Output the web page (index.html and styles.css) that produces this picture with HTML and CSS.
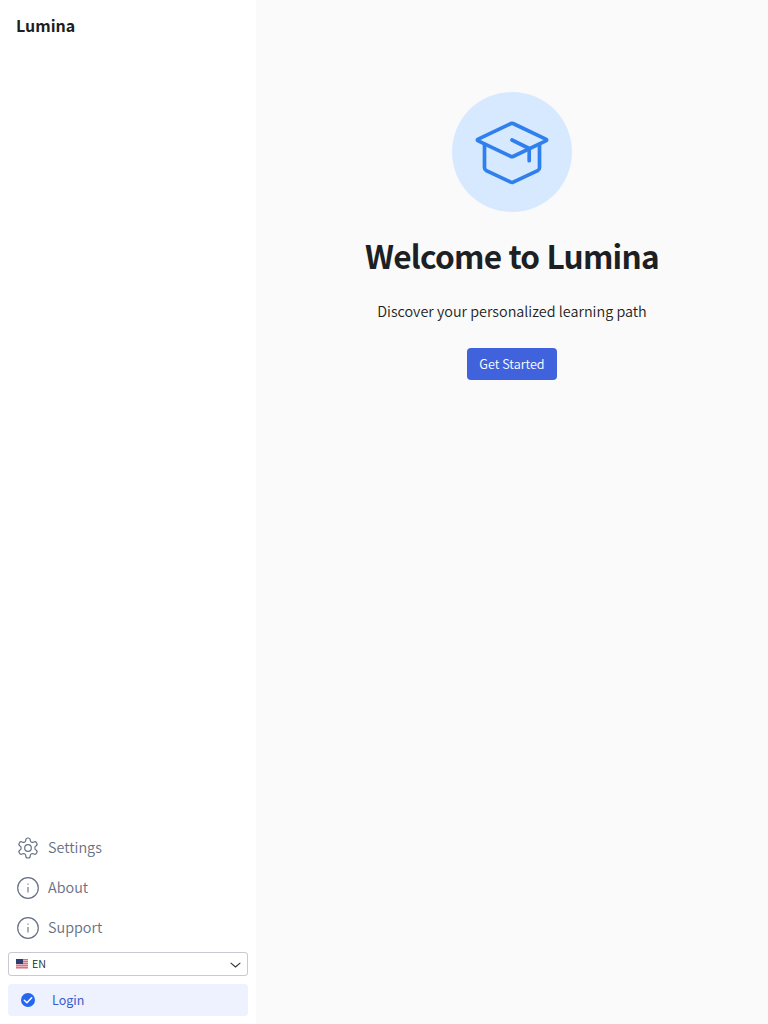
FILE: index.html
```html
<!DOCTYPE html>
<html lang="en">
<head>
<meta charset="utf-8">
<title>Lumina</title>
<link rel="stylesheet" href="styles.css">
</head>
<body>
<div class="app">
  <aside class="sidebar">
    <div class="brand">Lumina</div>
    <nav class="nav">
      <a class="nav-item">
        <svg class="nav-icon" viewBox="0 0 24 24"><path d="M12.22 2h-.44a2 2 0 0 0-2 2v.18a2 2 0 0 1-1 1.73l-.43.25a2 2 0 0 1-2 0l-.15-.08a2 2 0 0 0-2.73.73l-.22.38a2 2 0 0 0 .73 2.73l.15.1a2 2 0 0 1 1 1.72v.51a2 2 0 0 1-1 1.74l-.15.09a2 2 0 0 0-.73 2.73l.22.38a2 2 0 0 0 2.73.73l.15-.08a2 2 0 0 1 2 0l.43.25a2 2 0 0 1 1 1.73V20a2 2 0 0 0 2 2h.44a2 2 0 0 0 2-2v-.18a2 2 0 0 1 1-1.73l.43-.25a2 2 0 0 1 2 0l.15.08a2 2 0 0 0 2.73-.73l.22-.39a2 2 0 0 0-.73-2.73l-.15-.08a2 2 0 0 1-1-1.74v-.5a2 2 0 0 1 1-1.74l.15-.09a2 2 0 0 0 .73-2.73l-.22-.38a2 2 0 0 0-2.73-.73l-.15.08a2 2 0 0 1-2 0l-.43-.25a2 2 0 0 1-1-1.73V4a2 2 0 0 0-2-2z"/><circle cx="12" cy="12" r="3.3"/></svg>
        <span>Settings</span>
      </a>
      <a class="nav-item">
        <svg class="nav-icon" viewBox="0 0 24 24"><circle cx="12" cy="12" r="10.3"/><path class="info-mark" d="M12 11v5.5M12 7.5v1.2"/></svg>
        <span>About</span>
      </a>
      <a class="nav-item">
        <svg class="nav-icon" viewBox="0 0 24 24"><circle cx="12" cy="12" r="10.3"/><path class="info-mark" d="M12 11v5.5M12 7.5v1.2"/></svg>
        <span>Support</span>
      </a>
    </nav>
    <div class="language">
      <svg class="flag" viewBox="0 0 12 10"><path fill="#e9b4bb" d="M0 0h12v10H0z"/><path stroke="#d67480" stroke-width="1" d="M0 .5h12M0 2.5h12M0 4.5h12M0 6.5h12M0 8.5h12"/><path fill="#2c3e70" d="M0 0h7v5H0z"/></svg>
      <span>EN</span>
      <svg class="chevron" viewBox="0 0 12 8"><path d="M2 2.1 6.5 6 11 2.1"/></svg>
    </div>
    <a class="login">
      <svg class="check" viewBox="0 0 14 14"><circle cx="7" cy="7" r="7"/><path d="m3.3 7.2 2.6 2.5 4.8-5"/></svg>
      <span>Login</span>
    </a>
  </aside>
  <main class="welcome">
    <div class="hero">
      <svg class="cap" viewBox="0 0 80 80"><path d="M39 11.5Q40 11 41 11.5L73.8 27.2Q75.6 28 73.8 28.8L41 44.5Q40 45 39 44.5L6.2 28.8Q4.4 28 6.2 27.2Z"/><path d="M12.5 32v23.7q0 2 1.8 2.9L38.8 70.2q1.2.6 2.4 0l24.5-11.6q1.8-.9 1.8-2.9V32"/><path d="m40 28 17.2 8.5v12.2"/></svg>
    </div>
    <h1 class="title">Welcome to Lumina</h1>
    <p class="subtitle">Discover your personalized learning path</p>
    <button class="start">Get Started</button>
  </main>
</div>
</body>
</html>
```

FILE: styles.css
```css
* { box-sizing: border-box; }
body {
  margin: 0;
  font-family: "Noto Sans CJK SC", "Noto Sans", sans-serif;
  font-size: 14.38px;
  font-weight: 350;
  color: #1c1f23;
  background: #fafafa;
}
svg { display: block; fill: none; stroke-linecap: round; stroke-linejoin: round; }
.app { display: flex; height: 1024px; }
.sidebar {
  display: flex;
  flex-direction: column;
  width: 256px;
  padding: 8px;
  background: #fff;
}
.brand {
  padding: 3px 8px;
  font-size: 16px;
  font-weight: 700;
  line-height: 28px;
}
.nav { margin-top: auto; }
.nav-item {
  display: flex;
  align-items: center;
  gap: 8px;
  height: 40px;
  padding: 0 8px;
  color: #667085;
}
.nav-item span { padding-bottom: 3px; line-height: 21px; }
.nav-icon { width: 24px; height: 24px; stroke: currentColor; stroke-width: 1.2; }
.info-mark { stroke-width: 1.1; stroke-linecap: butt; }
.language {
  display: flex;
  align-items: center;
  gap: 4px;
  height: 24px;
  margin: 4px 0 8px;
  padding: 0 6px 0 7px;
  border: 1px solid #c9c9d3;
  border-radius: 3px;
  font-size: 10.8px;
  line-height: 18px;
}
.language span { padding-bottom: 2px; }
.flag { width: 12px; height: 10px; }
.chevron { width: 12px; height: 8px; margin: 2px 0 0 auto; stroke: #333; stroke-width: 1.1; }
.login {
  display: flex;
  align-items: center;
  gap: 17px;
  height: 32px;
  padding: 0 13px;
  border-radius: 4px;
  background: #eef1fe;
  color: #3b5bcc;
  font-size: 12.5px;
  font-weight: 400;
}
.login span { padding-bottom: 2px; }
.check { width: 14px; height: 14px; }
.check circle { fill: #2468f2; }
.check path { stroke: #fff; stroke-width: 1.5; }
.welcome {
  flex: 1;
  display: flex;
  flex-direction: column;
  align-items: center;
  padding-top: 92px;
}
.hero {
  display: flex;
  align-items: center;
  justify-content: center;
  width: 120px;
  height: 120px;
  border-radius: 50%;
  background: #d7e9ff;
}
.cap { width: 80px; height: 80px; stroke: #2f80ed; stroke-width: 3.7; }
.title {
  margin: 18px 0 0;
  font-size: 31.6px;
  font-weight: 700;
  letter-spacing: -0.75px;
  word-spacing: 0.6px;
  line-height: 50px;
}
.subtitle { margin: 19px 0 0; line-height: 24px; }
.start {
  height: 32px;
  margin-top: 25px;
  padding: 0 12px 2px;
  border: 0;
  border-radius: 4px;
  background: #4063dd;
  color: #fff;
  font: inherit;
  font-size: 12.6px;
}
```
